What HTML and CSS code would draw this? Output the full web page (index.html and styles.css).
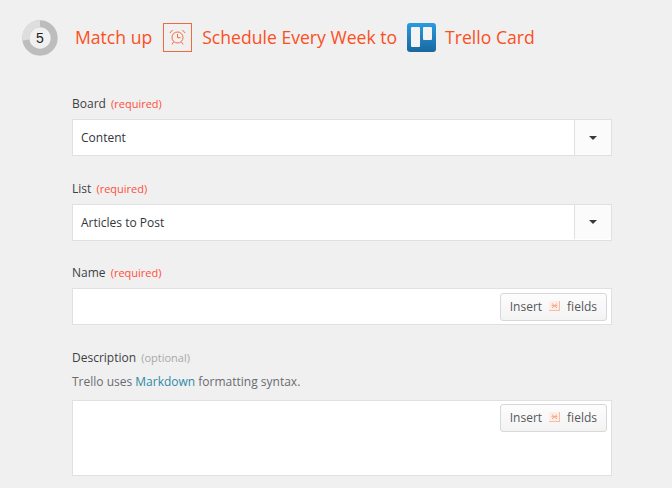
FILE: index.html
```html
<!DOCTYPE html>
<html lang="en">
<head>
<meta charset="utf-8">
<title>Match up</title>
<link rel="stylesheet" href="styles.css">
</head>
<body>
<header class="step-head">
  <svg class="step-ring" width="38" height="38" viewBox="0 0 38 38" aria-hidden="true">
    <circle cx="19" cy="19" r="14.2" fill="none" stroke="#bdbdbd" stroke-width="7"/>
    <path d="M19 4.8A14.2 14.2 0 0 0 4.9 21" fill="none" stroke="#dedede" stroke-width="7"/>
  </svg>
  <span class="step-num">5</span>
  <h1 class="step-title">
    <span class="t">Match up</span>
    <span class="app-box">
      <svg width="17" height="17" viewBox="0 0 17 17" aria-hidden="true">
        <circle cx="8.5" cy="8.5" r="5.5" fill="none" stroke="#f8683f" stroke-width="1"/>
        <path d="M8.5 5V8.7H11.5M0.8 4 3.6 1M16.2 4 13.4 1M4.5 13 3 15.5M12.5 13 14 15.5" fill="none" stroke="#f8683f" stroke-width="1"/>
      </svg>
    </span>
    <span class="t">Schedule Every Week to</span>
    <svg class="trello" width="29" height="29" viewBox="0 0 29 29" aria-hidden="true">
      <defs>
        <linearGradient id="tg" x1="0" y1="0" x2="0" y2="1">
          <stop offset="0" stop-color="#2a9be0"/>
          <stop offset="1" stop-color="#19689f"/>
        </linearGradient>
      </defs>
      <rect width="29" height="29" rx="3" fill="url(#tg)"/>
      <rect x="4" y="4" width="9" height="20" rx="1" fill="#f3f3f3"/>
      <rect x="16" y="4" width="9" height="13" rx="1" fill="#f3f3f3"/>
    </svg>
    <span class="t">Trello Card</span>
  </h1>
</header>

<form class="fields">
  <div class="field field-board">
    <div class="label">Board <em class="req">(required)</em></div>
    <div class="select"><span class="select-value">Content</span><span class="select-btn"><i class="caret"></i></span></div>
  </div>
  <div class="field field-list">
    <div class="label">List <em class="req">(required)</em></div>
    <div class="select"><span class="select-value">Articles to Post</span><span class="select-btn select-btn-short"><i class="caret"></i></span></div>
  </div>
  <div class="field field-name">
    <div class="label">Name <em class="req">(required)</em></div>
    <div class="text-input">
      <button type="button" class="insert">Insert
        <svg class="mini" width="11" height="10" viewBox="0 0 11 10" aria-hidden="true"><rect width="11" height="10" fill="#fdeee7"/><path d="M0 9.5H11M10.5 0V10" stroke="#f9bda6"/><path d="M3 2.5 8 7M8 2.5 3 7M2.5 4.7H8.5" stroke="#f4a78e"/></svg>
        fields</button>
    </div>
  </div>
  <div class="field field-desc">
    <div class="label">Description <em class="opt">(optional)</em></div>
    <p class="help">Trello uses <a href="#">Markdown</a> formatting syntax.</p>
    <div class="text-input text-area">
      <button type="button" class="insert">Insert
        <svg class="mini" width="11" height="10" viewBox="0 0 11 10" aria-hidden="true"><rect width="11" height="10" fill="#fdeee7"/><path d="M0 9.5H11M10.5 0V10" stroke="#f9bda6"/><path d="M3 2.5 8 7M8 2.5 3 7M2.5 4.7H8.5" stroke="#f4a78e"/></svg>
        fields</button>
    </div>
  </div>
</form>
</body>
</html>
```
FILE: styles.css
```css
* { box-sizing: border-box; }
html, body { margin: 0; padding: 0; }
body {
  width: 672px;
  height: 488px;
  overflow: hidden;
  background: #f0f0f0;
  font-family: "Open Sans", "DejaVu Sans", sans-serif;
  color: #3d3f45;
}
.step-head {
  position: relative;
  display: flex;
  align-items: center;
  height: 75px;
  padding-left: 21px;
}
.step-ring { display: block; flex: none; margin-top: 1px; }
.step-num {
  position: absolute;
  left: 21px;
  top: 19px;
  width: 38px;
  height: 38px;
  line-height: 38px;
  text-align: center;
  font-family: "Liberation Sans", sans-serif;
  font-size: 14px;
  color: #222;
}
.step-title {
  display: flex;
  align-items: center;
  margin: 0 0 0 16px;
  font-size: 17.6px;
  font-weight: 400;
  color: #fb4f22;
  white-space: nowrap;
}
.t { display: block; line-height: 24px; padding-bottom: 1px; }
.app-box {
  display: flex;
  align-items: center;
  justify-content: center;
  width: 29px;
  height: 29px;
  margin: 0 10px 0 11px;
  border: 1px solid #f0693f;
}
.trello { display: block; margin: 0 9px 0 10px; }
.fields { display: block; width: 540px; margin-left: 72px; }
.label {
  font-size: 12px;
  line-height: 18px;
  color: #3d3f45;
  margin-bottom: 6px;
}
.req, .opt { font-style: normal; font-size: 11px; margin-left: 2px; }
.req { color: #ff4f3a; }
.opt { color: #a8a8a8; }
.field-board { padding-top: 20px; }
.field-list { padding-top: 24px; }
.field-name { padding-top: 23px; }
.field-desc { padding-top: 24px; }
.select, .text-input {
  position: relative;
  background: #fff;
  border: 1px solid #e0e0e0;
  height: 37px;
}
.select { display: flex; }
.select-value {
  flex: 1;
  font-size: 12px;
  line-height: 35px;
  padding-left: 8px;
  color: #33353a;
}
.select-btn {
  display: flex;
  align-items: center;
  justify-content: center;
  flex: none;
  width: 37px;
  height: 35px;
  background: #fbfbfb;
  border-left: 1px solid #e0e0e0;
}
.select-btn-short { height: 34px; }
.caret {
  display: block;
  width: 0;
  height: 0;
  border-left: 4px solid transparent;
  border-right: 4px solid transparent;
  border-top: 4px solid #3a3a3a;
}
.insert {
  position: absolute;
  top: 4px;
  right: 4px;
  display: flex;
  align-items: center;
  gap: 7px;
  height: 28px;
  padding: 0 9px 2px;
  border: 1px solid #d8d8d8;
  border-radius: 3px;
  background: linear-gradient(#fdfdfd, #f3f3f3);
  font-family: inherit;
  font-size: 12px;
  color: #55575c;
}
.text-area .insert { top: 3px; }
.mini { display: block; flex: none; }
.help {
  margin: 0 0 9px;
  font-size: 12px;
  line-height: 18px;
  color: #6a6c70;
}
.help a { color: #2f8ba6; text-decoration: none; }
.text-area { height: 76px; }
```
